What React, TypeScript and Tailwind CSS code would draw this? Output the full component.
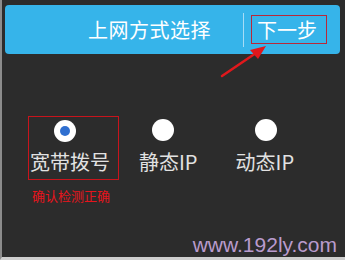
import React from "react";

const cjk = { fontFamily: '"Noto Sans CJK SC", "Noto Sans", sans-serif' };

function Radio({ checked }: { checked?: boolean }) {
  return (
    <div className="w-[22px] h-[22px] rounded-full bg-white flex items-center justify-center">
      {checked && <div className="w-[10px] h-[10px] rounded-full bg-[#2f6fd0]" />}
    </div>
  );
}

export default function App() {
  return (
    <div
      className="relative w-[345px] h-[260px] bg-[#2c2c2c] border-l-2 border-l-[#8c8c8c] border-b-[3px] border-b-[#cfcfcf] flex flex-col overflow-hidden"
      style={cjk}
    >
      {/* header */}
      <div className="mt-[5px] ml-[3px] mr-[5px] h-[49px] rounded-[4px] bg-[#36b4ea] flex items-center text-white">
        <div className="ml-[83px] text-[20px] leading-[24px] tracking-[0.5px]">上网方式选择</div>
        <div className="ml-[32px] w-px h-[34px] bg-[#a6dcf6]" />
        <div className="ml-[7px] w-[76px] h-[29px] border border-[#b8283a] flex items-center pl-[5px] text-[20px] leading-[24px]">
          下一步
        </div>
      </div>

      {/* options */}
      <div className="mt-[62px] flex items-start text-[#e2e2e2] text-[20px] leading-[24px]">
        <div className="ml-[26px] flex flex-col">
          <div className="w-[91px] h-[64px] border border-[#c8141c] flex flex-col">
            <div className="ml-[25px] mt-[3px]">
              <Radio checked />
            </div>
            <div className="ml-px mt-[8px]">宽带拨号</div>
          </div>
          <div className="ml-[4px] mt-[8px] text-[13px] leading-[16px] text-[#e8141c]">确认检测正确</div>
        </div>
        <div className="ml-[20px] mt-[3px] flex flex-col">
          <div className="ml-[13px]">
            <Radio />
          </div>
          <div className="mt-[9px]">静态IP</div>
        </div>
        <div className="ml-[38px] mt-[3px] flex flex-col">
          <div className="ml-[19px]">
            <Radio />
          </div>
          <div className="mt-[9px]">动态IP</div>
        </div>
      </div>

      {/* watermark */}
      <div
        className="mt-auto text-right pr-[8px] text-[21px] leading-[24px] text-[#b99bcc]"
        style={{ fontFamily: '"Liberation Sans", Arial, sans-serif' }}
      >
        www.192ly.com
      </div>

      {/* red arrow overlay */}
      <svg className="absolute left-0 top-0" width="345" height="260" viewBox="0 0 345 260">
        <line x1="220" y1="76" x2="254" y2="53" stroke="#e0181c" strokeWidth="2.5" strokeLinecap="round" />
        <polygon points="264,46 248,50 256,59" fill="#e0181c" />
      </svg>
    </div>
  );
}
